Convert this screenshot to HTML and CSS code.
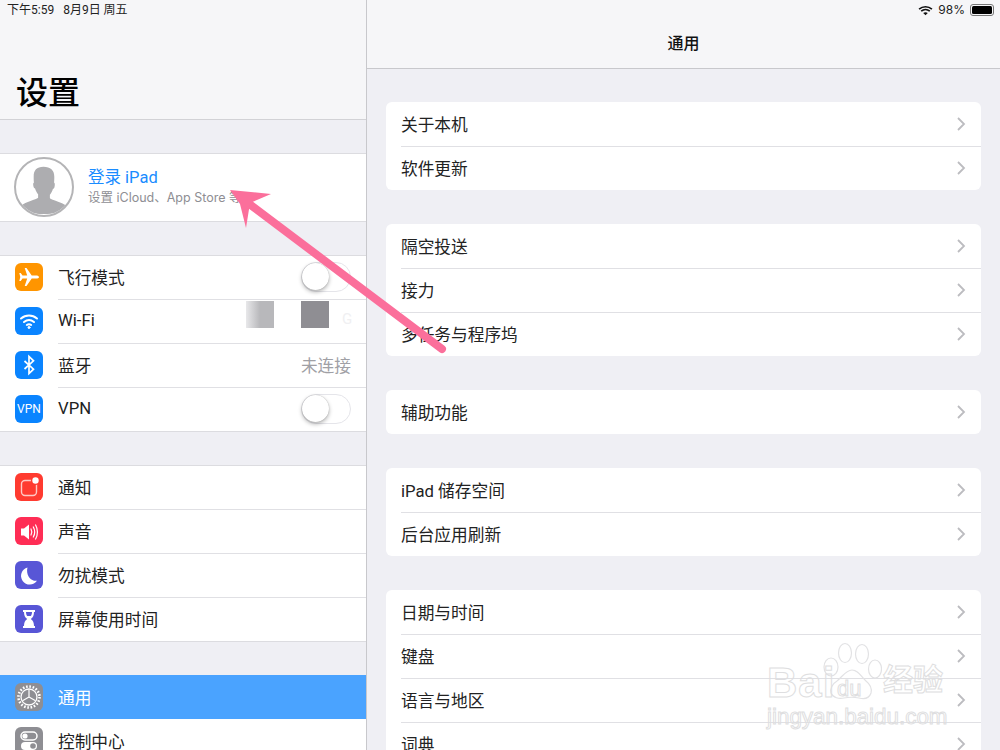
FILE: index.html
```html
<!DOCTYPE html>
<html lang="zh">
<head>
<meta charset="utf-8">
<title>设置</title>
<link rel="stylesheet" href="styles.css">
</head>
<body>
<div class="app">
  <aside class="sidebar">
    <header class="side-head">
      <div class="status"><span>下午5:59</span><span>8月9日 周五</span></div>
      <h1 class="large-title">设置</h1>
    </header>
    <section class="group profile">
      <div class="avatar">
        <svg viewBox="0 0 56 56" width="55" height="55"><path fill="#adadb0" d="M28 8c7 0 11 3.500 11 10 0 2.500 0 4.500-.3 6 1 .3 1 2.500.5 4.500-.4 1.500-1 2-1.600 2-.7 2.500-2 4.600-3.100 6v3.500c2 2 13 4 17 8 1.200 1.200 1.800 2.500 2.200 4C50 56 38 56 28 56S6 56 3.300 51.500c.4-1.500 1-2.800 2.200-4 4-4 15-6 17-8V36c-1.100-1.400-2.400-3.500-3.100-6-.6 0-1.200-.5-1.600-2-.5-2-.5-3.700.5-4-.3-1.500-.3-3.500-.3-6C18 11.500 21 8 28 8z"/></svg>
      </div>
      <div class="profile-text">
        <div class="profile-name">登录 iPad</div>
        <div class="profile-sub">设置 iCloud、App Store 等</div>
      </div>
    </section>
    <section class="group">
      <div class="row">
        <span class="icon orange"><svg viewBox="0 0 28 28" width="28" height="28"><path fill="#fff" d="M24 14c0-1-1.400-1.600-3-1.600h-4.300L11.500 5H9.700l2.500 7.400H7.500L5.700 10H4.300l1 4-1 4h1.400l1.800-2.400h4.700L9.700 23h1.800l5.200-7.400H21c1.600 0 3-.6 3-1.600z"/></svg></span>
        <span class="label">飞行模式</span>
        <span class="toggle"><span class="knob"></span></span>
      </div>
      <div class="row">
        <span class="icon blue"><svg viewBox="0 0 28 28" width="28" height="28" fill="none" stroke="#fff" stroke-width="2" stroke-linecap="round"><path d="M6 11.500c4.700-4 11.300-4 16 0"/><path d="M9 15c3-2.500 7-2.500 10 0"/><path d="M11.800 18c1.300-1 3.100-1 4.400 0"/><circle cx="14" cy="20.500" r="1" fill="#fff" stroke-width="1"/></svg></span>
        <span class="label">Wi-Fi</span>
        <span class="wifi-mask">
          <span class="blur-box light"></span>
          <span class="blur-box dark"></span>
          <span class="ghost-g">G</span>
        </span>
      </div>
      <div class="row">
        <span class="icon blue"><svg viewBox="0 0 28 28" width="28" height="28" fill="none" stroke="#fff" stroke-width="1.700"><path d="M9.500 10l9 8.200-4.500 4.300V5.500l4.500 4.300-9 8.200"/></svg></span>
        <span class="label">蓝牙</span>
        <span class="value">未连接</span>
      </div>
      <div class="row">
        <span class="icon blue vpn">VPN</span>
        <span class="label">VPN</span>
        <span class="toggle"><span class="knob"></span></span>
      </div>
    </section>
    <section class="group">
      <div class="row">
        <span class="icon red"><svg viewBox="0 0 28 28" width="28" height="28"><rect x="6.500" y="7.500" width="15" height="15" rx="3.500" fill="none" stroke="#ffc9c4" stroke-width="1.400"/><circle cx="20.500" cy="7.500" r="4.600" fill="#ff3b30"/><circle cx="20.500" cy="7.500" r="3.200" fill="#fff"/></svg></span>
        <span class="label">通知</span>
      </div>
      <div class="row">
        <span class="icon pink"><svg viewBox="0 0 28 28" width="28" height="28"><path fill="#fff" d="M6 11.500h3l5-4v15l-5-4H6z"/><path fill="none" stroke="#fff" stroke-width="1.200" stroke-linecap="round" d="M16 12c1 1.800 1 4.200 0 6M18.300 10c1.700 3 1.700 7 0 10M20.600 8c2.400 4 2.400 10 0 14"/></svg></span>
        <span class="label">声音</span>
      </div>
      <div class="row">
        <span class="icon indigo"><svg viewBox="0 0 28 28" width="28" height="28"><path fill="#fff" d="M12.500 6.500a8.700 8.700 0 1 0 9.500 13.200c-6 1-11.500-5.500-9.500-13.200z"/></svg></span>
        <span class="label">勿扰模式</span>
      </div>
      <div class="row">
        <span class="icon indigo"><svg viewBox="0 0 28 28" width="28" height="28"><path fill="#fff" d="M8 5h12v2h-1c0 3.500-1 5.500-3.200 7 2.200 1.500 3.200 3.500 3.200 7h1v2H8v-2h1c0-3.500 1-5.500 3.200-7C10 12.500 9 10.500 9 7H8z"/><path fill="#5856d6" d="M11 7h6c0 1.500-.4 3-1.200 4h-3.600C11.400 10 11 8.500 11 7z"/></svg></span>
        <span class="label">屏幕使用时间</span>
      </div>
    </section>
    <section class="group">
      <div class="row selected">
        <span class="icon gray"><svg viewBox="0 0 28 28" width="28" height="28" fill="none" stroke="#fff"><circle cx="14" cy="14" r="10.500" stroke-width="2.600" stroke-dasharray="1.600 1.700"/><circle cx="14" cy="14" r="8" stroke-width="1.300"/><path stroke-width="1.200" d="M14 14V6.500M14 14l6.500 3.700M14 14l-6.500 3.700"/></svg></span>
        <span class="label">通用</span>
      </div>
      <div class="row">
        <span class="icon gray"><svg viewBox="0 0 28 28" width="28" height="28"><rect x="6" y="5" width="16" height="8" rx="4" fill="none" stroke="#fff" stroke-width="1.500"/><circle cx="10" cy="9" r="2.600" fill="#fff"/><rect x="6" y="15" width="16" height="8" rx="4" fill="#fff"/><circle cx="18" cy="19" r="2.800" fill="#8e8e93"/></svg></span>
        <span class="label">控制中心</span>
      </div>
    </section>
  </aside>

  <main class="detail">
    <header class="detail-head">
      <div class="status right">
        <svg viewBox="0 0 16 12" width="15" height="11"><path fill="none" stroke="#111" stroke-width="1.800" d="M1 4.500c4-3.500 10-3.500 14 0M3.300 6.800c2.700-2.300 6.700-2.300 9.400 0"/><path fill="#111" d="M5.500 8.800c1.500-1.200 3.500-1.200 5 0L8 11.300z"/></svg>
        <span class="battery-pct">98%</span>
        <span class="battery"><span class="battery-fill"></span></span>
      </div>
      <h2 class="nav-title">通用</h2>
    </header>
    <section class="card">
      <div class="card-row"><span class="card-label">关于本机</span><svg class="chev" viewBox="0 0 9 14"><path d="M1 1l6 6-6 6"/></svg></div>
      <div class="card-row"><span class="card-label">软件更新</span><svg class="chev" viewBox="0 0 9 14"><path d="M1 1l6 6-6 6"/></svg></div>
    </section>
    <section class="card">
      <div class="card-row"><span class="card-label">隔空投送</span><svg class="chev" viewBox="0 0 9 14"><path d="M1 1l6 6-6 6"/></svg></div>
      <div class="card-row"><span class="card-label">接力</span><svg class="chev" viewBox="0 0 9 14"><path d="M1 1l6 6-6 6"/></svg></div>
      <div class="card-row"><span class="card-label">多任务与程序坞</span><svg class="chev" viewBox="0 0 9 14"><path d="M1 1l6 6-6 6"/></svg></div>
    </section>
    <section class="card">
      <div class="card-row"><span class="card-label">辅助功能</span><svg class="chev" viewBox="0 0 9 14"><path d="M1 1l6 6-6 6"/></svg></div>
    </section>
    <section class="card">
      <div class="card-row"><span class="card-label">iPad 储存空间</span><svg class="chev" viewBox="0 0 9 14"><path d="M1 1l6 6-6 6"/></svg></div>
      <div class="card-row"><span class="card-label">后台应用刷新</span><svg class="chev" viewBox="0 0 9 14"><path d="M1 1l6 6-6 6"/></svg></div>
    </section>
    <section class="card">
      <div class="card-row"><span class="card-label">日期与时间</span><svg class="chev" viewBox="0 0 9 14"><path d="M1 1l6 6-6 6"/></svg></div>
      <div class="card-row"><span class="card-label">键盘</span><svg class="chev" viewBox="0 0 9 14"><path d="M1 1l6 6-6 6"/></svg></div>
      <div class="card-row"><span class="card-label">语言与地区</span><svg class="chev" viewBox="0 0 9 14"><path d="M1 1l6 6-6 6"/></svg></div>
      <div class="card-row"><span class="card-label">词典</span><svg class="chev" viewBox="0 0 9 14"><path d="M1 1l6 6-6 6"/></svg></div>
    </section>
  </main>

  <svg class="arrow" viewBox="0 0 1000 750" width="1000" height="750">
    <path d="M442 349L240 197" fill="none" stroke="#fb6f9b" stroke-width="8" stroke-linecap="round"/>
    <path d="M230 190L271 194 250 203 246 228 240 204z" fill="#fb6f9b"/>
  </svg>

  <div class="watermark">
    <svg class="paw" viewBox="0 0 60 66" width="60" height="66" fill="none" stroke="#e2e2e4" stroke-width="1.200">
      <ellipse cx="9" cy="25" rx="7" ry="9"/>
      <ellipse cx="23" cy="11" rx="6.500" ry="9.500"/>
      <ellipse cx="40" cy="12" rx="6.500" ry="9.500"/>
      <ellipse cx="53" cy="27" rx="6.500" ry="9"/>
      <path d="M30 28c6 0 9 6 14 11 5 4 6 8 5 12-2 6-8 6-12 5-5-1-10-1-15 0-5 1-11 0-13-5-1-4 1-9 6-12 5-4 9-11 15-11z"/>
    </svg>
    <span class="wm-bai">Bai</span>
    <span class="wm-du">du</span>
    <span class="wm-jy">经验</span>
    <span class="wm-url">jingyan.baidu.com</span>
  </div>
</div>
</body>
</html>
```
FILE: styles.css
```css
* { box-sizing: border-box; }
html, body { margin: 0; height: 100%; }
body {
  overflow: hidden;
  font-family: "Roboto", "Noto Sans CJK SC", sans-serif;
  color: #1c1c1e;
  background: #efeff4;
}
.app { position: relative; display: flex; width: 1000px; height: 750px; overflow: hidden; }

.sidebar { width: 367px; flex: none; border-right: 1px solid #c8c8cc; background: #efeff4; }
.side-head { height: 120px; background: #f6f6f8; border-bottom: 1px solid #d2d2d6; padding: 3px 0 0 7px; }
.status { display: flex; gap: 9px; font-size: 12px; line-height: 14px; color: #222; }
.large-title { margin: 54px 0 0 9px; font-size: 32px; line-height: 44px; font-weight: 500; color: #000; }

.group { background: #fff; margin-top: 34px; box-shadow: inset 0 1px 0 #dcdce0, 0 1px 0 #dcdce0; }
.profile { margin-top: 33px; height: 68px; display: flex; align-items: center; padding-left: 14px; gap: 14px; }
.avatar { width: 60px; height: 60px; border-radius: 50%; border: 2px solid #b4b4b6; overflow: hidden; flex: none; }
.profile-name { font-size: 16.500px; line-height: 22px; color: #1a8cff; }
.profile-sub { font-family: "Inter", "Noto Sans CJK SC", sans-serif; font-size: 12.500px; line-height: 18px; color: #8e8e93; }

.row { position: relative; height: 44px; display: flex; align-items: center; padding: 0 15px; }
.row + .row::before { content: ""; position: absolute; left: 58px; right: 0; top: 0; height: 1px; background: #e0e0e4; }
.icon { width: 28px; height: 28px; border-radius: 6px; flex: none; display: flex; }
.orange { background: #ff9500; }
.blue { background: #0a84ff; }
.red { background: #ff3b30; }
.pink { background: #ff2d55; }
.indigo { background: #5856d6; }
.gray { background: #8e8e93; }
.vpn { align-items: center; justify-content: center; color: #fff; font-size: 12px; }
.label { margin-left: 15px; padding-bottom: 1px; font-size: 16.700px; flex: 1; color: #222; }
.value { font-size: 16.700px; padding-bottom: 1px; color: #a0a0a5; }
.selected { background: #4aa3ff; }
.selected .label { color: #fff; }
.selected + .row::before { display: none; }

.toggle { width: 50px; height: 30px; border-radius: 15px; border: 1.500px solid #e5e5ea; background: #fff; position: relative; }
.knob { position: absolute; left: 0; top: 0; width: 27px; height: 27px; border-radius: 50%; background: #fff; box-shadow: 0 2px 4px rgba(0,0,0,.3), 0 0 1px rgba(0,0,0,.3); }

.wifi-mask { position: absolute; left: 246px; top: 2px; display: flex; gap: 27px; }
.blur-box { width: 28px; height: 27px; display: block; }
.light { background: linear-gradient(90deg, #e8e8ea, #b8b8bb 50%); }
.dark { background: #8f8e93; }
.ghost-g { font-size: 15px; color: #f0f0f2; position: absolute; left: 96px; top: 9px; }

.detail { flex: 1; background: #efeff4; }
.detail-head { height: 69px; background: #f6f6f8; border-bottom: 1px solid #c8c8cc; padding-top: 3px; }
.status.right { justify-content: flex-end; align-items: center; gap: 5px; padding-right: 6px; font-size: 12px; }
.battery-pct { font-family: "Inter", sans-serif; font-size: 12px; }
.battery { width: 24px; height: 12px; margin-left: 0; border: 1px solid #777; border-radius: 3px; padding: 1px; display: flex; }
.battery-fill { flex: 1; background: #000; border-radius: 1.500px; }
.nav-title { margin: 15px 0 0; text-align: center; font-size: 16px; line-height: 24px; font-weight: 500; color: #111; }

.card { margin: 34px 19px 0 19px; background: #fff; border-radius: 6px; }
.detail-head + .card { margin-top: 33px; }
.card-row { position: relative; height: 44px; display: flex; align-items: center; justify-content: space-between; padding: 0 15px; font-size: 16.700px; color: #222; }
.card-label { padding-bottom: 1px; }
.card-row + .card-row::before { content: ""; position: absolute; left: 15px; right: 0; top: 0; height: 1px; background: #e0e0e4; }
.chev { width: 9px; height: 14px; fill: none; stroke: #bcbcc0; stroke-width: 1.800; }

.arrow { position: absolute; left: 0; top: 0; pointer-events: none; }

.watermark { position: absolute; left: 767px; top: 640px; width: 180px; height: 90px; pointer-events: none; }
.paw { position: absolute; left: 55px; top: 2px; }
.wm-bai, .wm-du, .wm-jy, .wm-url {
  position: absolute;
  color: transparent;
  -webkit-text-stroke: 1px #dedee0;
  line-height: 1;
  white-space: nowrap;
  font-family: "Liberation Sans", "Noto Sans CJK SC", sans-serif;
}
.wm-bai { left: 0; top: 22px; font-size: 42px; font-weight: 700; letter-spacing: 1px; }
.wm-du { left: 70px; top: 38px; font-size: 22px; }
.wm-jy { left: 116px; top: 25px; font-size: 30px; font-weight: 700; }
.wm-url { left: 0; top: 66px; font-size: 22.400px; }
```
